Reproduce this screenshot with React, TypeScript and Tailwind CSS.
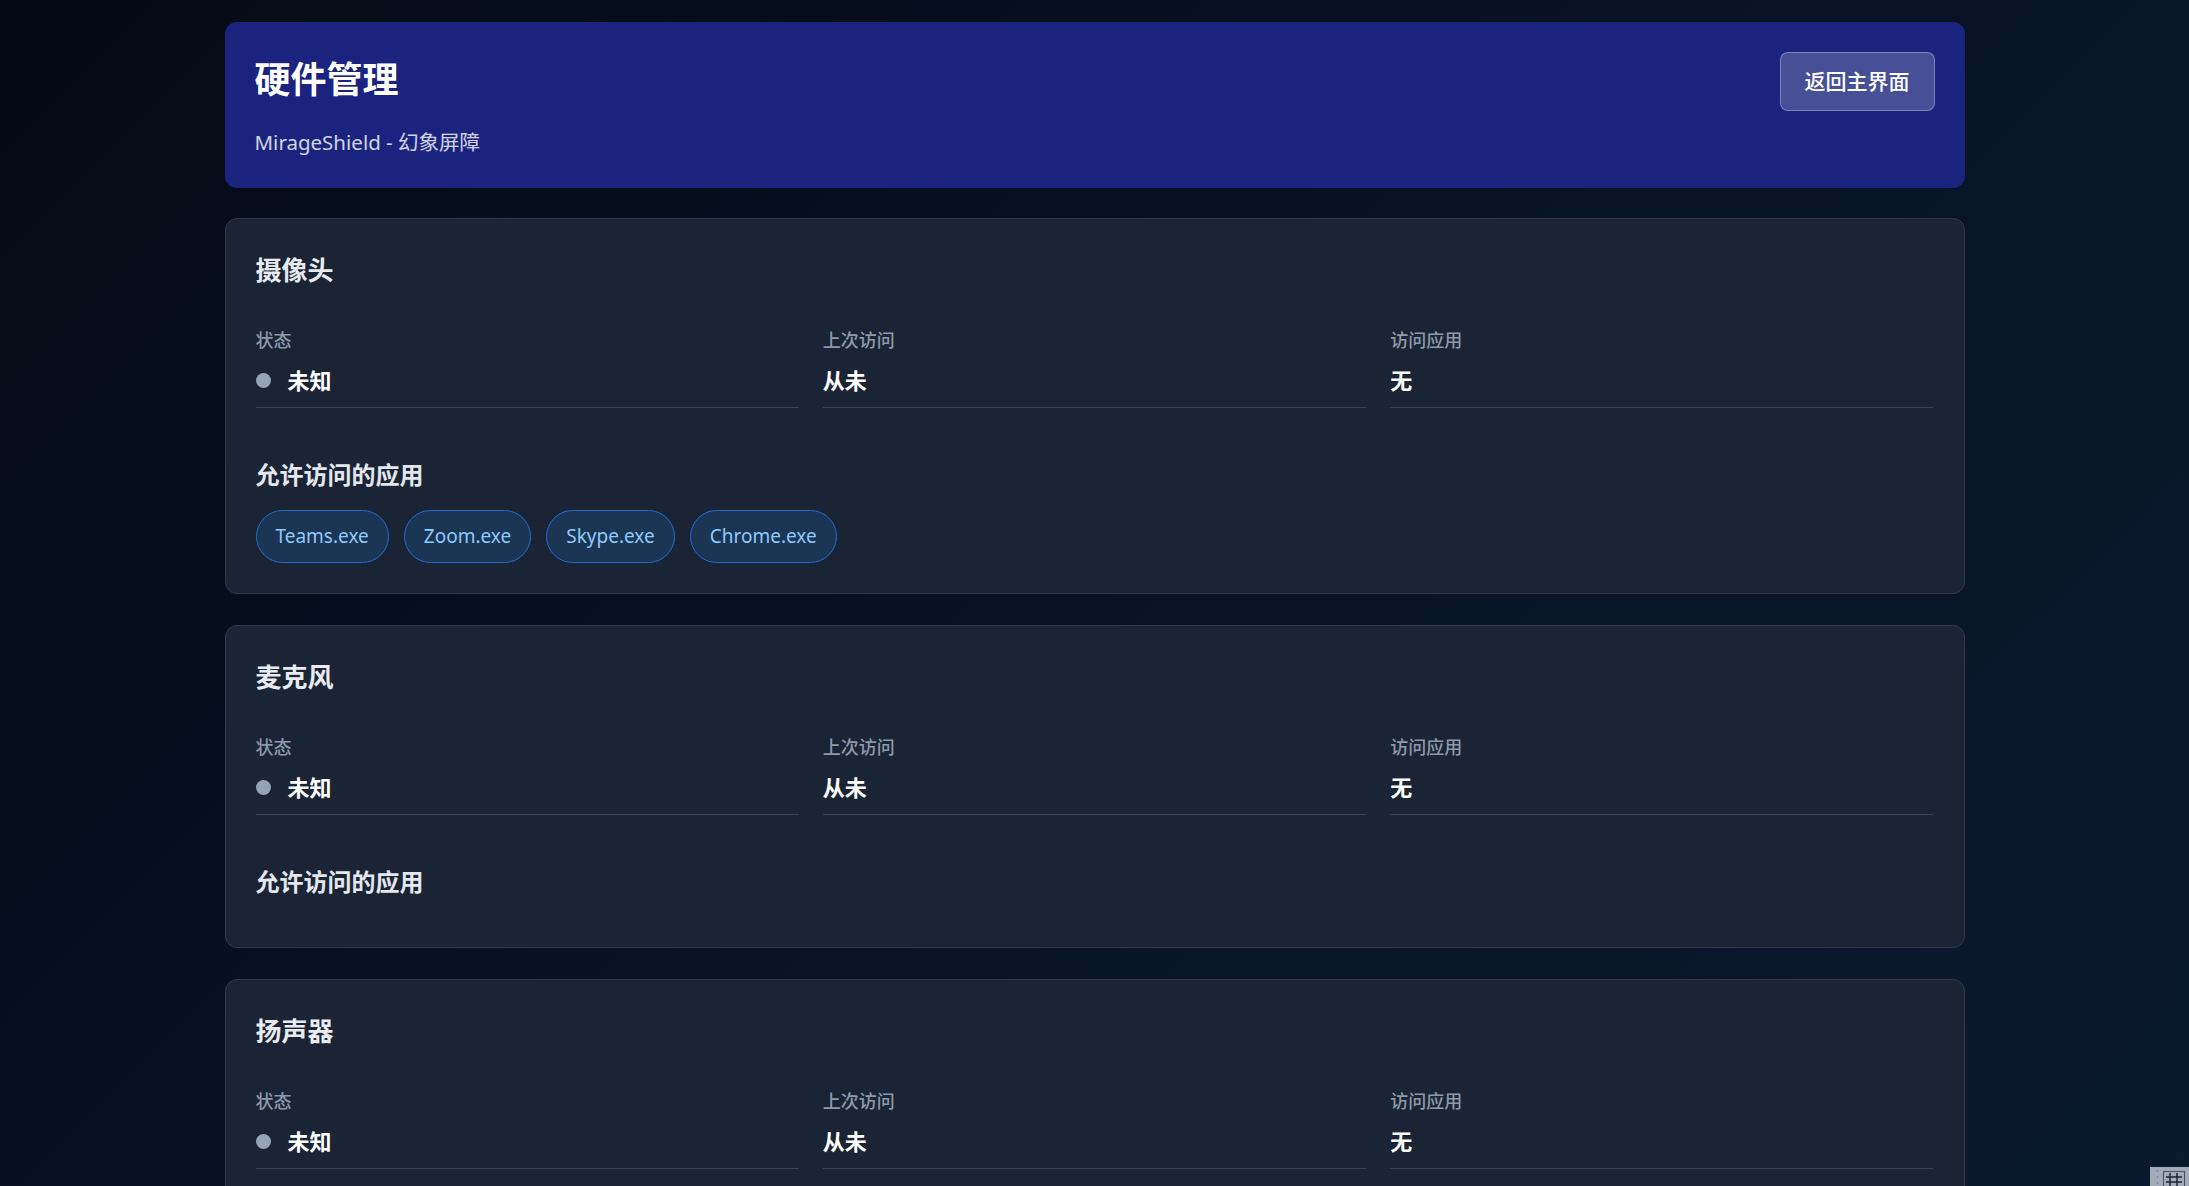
import React from "react"

type Device = {
  name: string
  status: string
  lastAccess: string
  accessApp: string
  allowed: string[]
}

const devices: Device[] = [
  {
    name: "摄像头",
    status: "未知",
    lastAccess: "从未",
    accessApp: "无",
    allowed: ["Teams.exe", "Zoom.exe", "Skype.exe", "Chrome.exe"],
  },
  { name: "麦克风", status: "未知", lastAccess: "从未", accessApp: "无", allowed: [] },
  { name: "扬声器", status: "未知", lastAccess: "从未", accessApp: "无", allowed: [] },
]

const font = { fontFamily: '"Noto Sans", "Noto Sans CJK SC", sans-serif' }

function InfoItem({ label, children }: { label: string; children: React.ReactNode }) {
  return (
    <div className="border-b border-[#3a414d] pb-3">
      <div className="text-[18px] leading-[26px] text-[#8e99ab] font-medium mb-3">{label}</div>
      <div className="flex items-center text-[22px] leading-[30px] font-bold text-white">{children}</div>
    </div>
  )
}

function DeviceCard({ device }: { device: Device }) {
  return (
    <div className="bg-[#1b2435] border border-[#333a46] rounded-xl p-[30px]">
      <h2 className="text-[26px] leading-[42px] font-bold text-[#e8ebf0]">{device.name}</h2>

      <div className="grid grid-cols-3 gap-x-6 mt-[36px] mb-[50px]">
        <InfoItem label="状态">
          <span className="w-[15px] h-[15px] rounded-full bg-[#94a3b8] mr-[17px] shrink-0" />
          {device.status}
        </InfoItem>
        <InfoItem label="上次访问">{device.lastAccess}</InfoItem>
        <InfoItem label="访问应用">{device.accessApp}</InfoItem>
      </div>

      <h3 className="text-[24px] leading-[34px] font-bold text-[#e3e7ee] mb-[18px]">允许访问的应用</h3>
      <div className="flex flex-wrap gap-[15px]">
        {device.allowed.map((app) => (
          <span
            key={app}
            className="px-[19px] py-[10px] rounded-full border border-[#1f6fd2] bg-[#1b3554] text-[#90caf9] text-[19px] leading-[31px]"
          >
            {app}
          </span>
        ))}
      </div>
    </div>
  )
}

export default function App() {
  return (
    <div
      className="min-h-screen bg-[linear-gradient(135deg,#050a15_0%,#081427_60%,#0c1a31_100%)] pt-[22px] pb-10"
      style={font}
    >
      <div className="max-w-[1740px] mx-auto">
        <div className="bg-[#1a237e] rounded-xl p-[30px] flex items-start justify-between mb-[30px]">
          <div>
            <h1 className="text-[36px] leading-[56px] font-bold text-white">硬件管理</h1>
            <p className="mt-[18px] text-[20.5px] leading-[32px] text-white/80">MirageShield - 幻象屏障</p>
          </div>
          <button className="px-6 py-3 rounded-lg border border-white/30 bg-white/20 text-white text-[21px] leading-[33px] font-medium">
            返回主界面
          </button>
        </div>

        <div className="flex flex-col gap-[31px]">
          {devices.map((d) => (
            <DeviceCard key={d.name} device={d} />
          ))}
        </div>
      </div>

      <div className="fixed right-0 bottom-0 w-[39px] h-[19px] bg-[#a3abb9] flex items-start pl-[6px] pt-[2px] gap-[4px]">
        <svg width="3" height="15" viewBox="0 0 3 15">
          <circle cx="1.5" cy="2" r="1" fill="#7d8594" />
          <circle cx="1.5" cy="8" r="1" fill="#7d8594" />
          <circle cx="1.5" cy="14" r="1" fill="#7d8594" />
        </svg>
        <svg width="22" height="17" viewBox="0 0 22 17">
          <rect x="0.5" y="2.5" width="21" height="15" fill="none" stroke="#4a5060" />
          <path d="M7 4v13M14 4v13M3 8h16M3 13h16" stroke="#1f2430" strokeWidth="1.5" />
        </svg>
      </div>
    </div>
  )
}
